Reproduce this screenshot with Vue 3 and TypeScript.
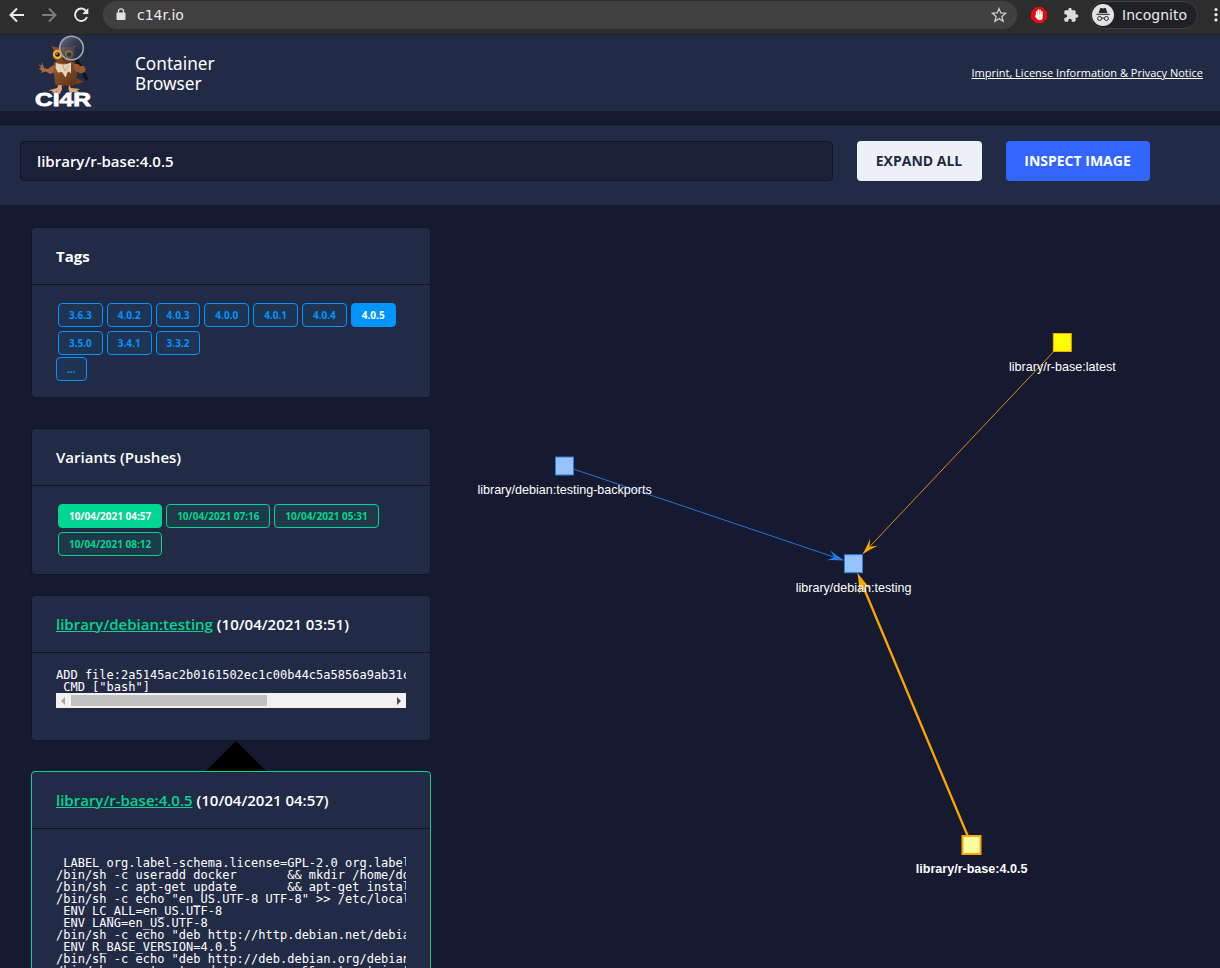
<script setup lang="ts">
interface Chip {
  label: string
  active?: boolean
}

interface GraphNode {
  label: string
  x: number
  y: number
  half: number
  kind: 'image' | 'latest' | 'selected'
}

interface Edge {
  x1: number
  y1: number
  x2: number
  y2: number
  lineX: number
  lineY: number
  angle: number
  size: number
  kind: 'blue' | 'orange' | 'strong'
}

const tags: Chip[] = [
  { label: '3.6.3' },
  { label: '4.0.2' },
  { label: '4.0.3' },
  { label: '4.0.0' },
  { label: '4.0.1' },
  { label: '4.0.4' },
  { label: '4.0.5', active: true },
  { label: '3.5.0' },
  { label: '3.4.1' },
  { label: '3.3.2' },
]

const variants: Chip[] = [
  { label: '10/04/2021 04:57', active: true },
  { label: '10/04/2021 07:16' },
  { label: '10/04/2021 05:31' },
  { label: '10/04/2021 08:12' },
]

const debianLayers = [
  'ADD file:2a5145ac2b0161502ec1c00b44c5a5856a9ab31c',
  ' CMD ["bash"]',
].join('\n')

const rBaseLayers = [
  '',
  ' LABEL org.label-schema.license=GPL-2.0 org.label-schema.vcs-url',
  '/bin/sh -c useradd docker       && mkdir /home/docker',
  '/bin/sh -c apt-get update       && apt-get install -y',
  '/bin/sh -c echo "en_US.UTF-8 UTF-8" >> /etc/locale.gen',
  ' ENV LC_ALL=en_US.UTF-8',
  ' ENV LANG=en_US.UTF-8',
  '/bin/sh -c echo "deb http://http.debian.net/debian sid main"',
  ' ENV R_BASE_VERSION=4.0.5',
  '/bin/sh -c echo "deb http://deb.debian.org/debian"',
  '/bin/sh -c apt-get update         && apt-get install',
].join('\n')

const nodes: GraphNode[] = [
  { label: 'library/debian:testing-backports', x: 564.5, y: 466, half: 9, kind: 'image' },
  { label: 'library/debian:testing', x: 853.5, y: 563.7, half: 9, kind: 'image' },
  { label: 'library/r-base:latest', x: 1062.3, y: 342.5, half: 9, kind: 'latest' },
  { label: 'library/r-base:4.0.5', x: 971.5, y: 845, half: 9, kind: 'selected' },
]

function edge(from: GraphNode, tipX: number, tipY: number, size: number, kind: Edge['kind']): Edge {
  const angle = Math.atan2(tipY - from.y, tipX - from.x)
  return {
    x1: from.x,
    y1: from.y,
    x2: tipX,
    y2: tipY,
    lineX: tipX - Math.cos(angle) * size * 0.5,
    lineY: tipY - Math.sin(angle) * size * 0.5,
    angle: (angle * 180) / Math.PI,
    size,
    kind,
  }
}

function arrowHead(s: number): string {
  const barb = s * 0.31
  return `M0 0Q${-s * 0.6} ${s * 0.14} ${-s} ${barb}L${-s * 0.62} 0L${-s} ${-barb}Q${-s * 0.6} ${-s * 0.14} 0 0Z`
}

const edges: Edge[] = [
  edge(nodes[0], 844.5, 560.6, 17, 'blue'),
  edge(nodes[2], 862.3, 554.5, 17, 'orange'),
  edge(nodes[3], 857.3, 572.5, 21, 'strong'),
]
</script>

<template>
  <div class="window">
    <div class="chrome">
      <svg class="nav" width="94" height="30" viewBox="0 0 94 30" fill="none">
        <path d="M24 15H11M17 8.5 10.5 15 17 21.5" stroke="#e8eaed" stroke-width="2" />
        <path d="M42 15H55M49 8.500 55.500 15 49 21.500" stroke="#7c7d80" stroke-width="2" />
        <path d="M86.300 11.200A6.200 6.200 0 1 0 87 17" stroke="#e8eaed" stroke-width="2" />
        <path d="M88.300 8V14H82.300Z" fill="#e8eaed" />
      </svg>
      <div class="omnibox">
        <svg width="10" height="13" viewBox="0 0 10 13">
          <rect x="0.500" y="4.500" width="9" height="7.500" rx="1" fill="#e0e0e0" />
          <path d="M2.500 5V3.300a2.500 2.500 0 0 1 5 0V5" fill="none" stroke="#e0e0e0" stroke-width="1.300" />
        </svg>
        <span class="address">c14r.io</span>
        <svg class="star" width="16" height="16" viewBox="0 0 16 16">
          <path d="M8 1.500 9.800 6 14.700 6.300 10.900 9.500 12.100 14.200 8 11.600 3.900 14.200 5.100 9.500 1.300 6.300 6.200 6Z" fill="none" stroke="#c9cbce" stroke-width="1.300" />
        </svg>
      </div>
      <svg class="blocker" width="16" height="16" viewBox="0 0 16 16">
        <path d="M4.700 0h6.600L16 4.700v6.600L11.300 16H4.700L0 11.300V4.700Z" fill="#e8090b" />
        <path d="M5.600 8.500V4.700M7.300 7.500V3M9.100 7.500V3.300M10.900 8.500V4.700" stroke="#fff" stroke-width="1.500" stroke-linecap="round" />
        <path d="M4.800 7.500h6.900v2.200q0 3.500-3 3.500-2.200 0-3.100-1.800L3.700 8.700q.6-.8 1.400.2Z" fill="#fff" />
      </svg>
      <svg class="puzzle" width="16" height="16" viewBox="0 0 24 24">
        <path d="M20.500 11H19V7a2 2 0 0 0-2-2h-4V3.500a2.500 2.500 0 0 0-5 0V5H4a2 2 0 0 0-2 2v3.800h1.500a2.700 2.700 0 0 1 0 5.400H2V20a2 2 0 0 0 2 2h3.800v-1.500a2.700 2.700 0 0 1 5.400 0V22H17a2 2 0 0 0 2-2v-4h1.500a2.500 2.500 0 0 0 0-5Z" fill="#dadce0" />
      </svg>
      <div class="incognito">
        <svg width="22" height="22" viewBox="0 0 22 22">
          <circle cx="11" cy="11" r="11" fill="#e2e2e2" />
          <path d="M6.700 9 8 4.600q.3-.8 1.200-.5l1.800.4 1.800-.4q.9-.3 1.200.5L15.300 9Z" fill="#252629" />
          <path d="M4.500 10.300H17.500" stroke="#252629" stroke-width="1.100" />
          <g fill="none" stroke="#252629" stroke-width="1">
            <circle cx="7.600" cy="14.500" r="2" />
            <circle cx="14.400" cy="14.500" r="2" />
            <path d="M9.600 14.300q1.400-.8 2.800 0" />
          </g>
        </svg>
        <span>Incognito</span>
      </div>
      <svg class="kebab" width="6" height="16" viewBox="0 0 6 16" fill="#e8eaed">
        <circle cx="3" cy="2.500" r="1.600" />
        <circle cx="3" cy="7.700" r="1.600" />
        <circle cx="3" cy="12.900" r="1.600" />
      </svg>
    </div>

    <header class="header">
      <svg class="logo" width="62" height="76" viewBox="0 0 62 76">
        <defs>
          <linearGradient id="lens" x1="0" y1="0" x2="1" y2="1">
            <stop offset="0" stop-color="#a59fa0" stop-opacity="0.700" />
            <stop offset="0.500" stop-color="#3b4763" stop-opacity="0.500" />
            <stop offset="1" stop-color="#0d1830" stop-opacity="0.950" />
          </linearGradient>
          <linearGradient id="feather" x1="0" y1="0" x2="1" y2="1">
            <stop offset="0" stop-color="#9a5d30" />
            <stop offset="1" stop-color="#5c3113" />
          </linearGradient>
        </defs>
        <path d="M42 43 49.500 46.500 44 49 38 49Z" fill="#73401c" />
        <path d="M22 29Q17 31 14 34L10 33 8 27 7.500 31 4.500 29 7 33 4.500 33 8 36 6.500 38 12 36.500 16 39Q21 38 23 34Z" fill="#a5683f" />
        <path d="M20.500 27Q18.500 34 20.500 42L21 49Q26 53 31 50 37 53 42 49L42.500 42Q44 34 40 27Z" fill="url(#feather)" />
        <path d="M17 10.500Q20 13 25 12.500L36 12 43 10 40 14 42 22Q38 29 31 28 23 29 19.500 23 18 18 20 15Z" fill="url(#feather)" />
        <path d="M22 28Q30 31 37 27.500L37 38 34 36.500 31.500 42.500 28 37 24 37.500 21.500 33Z" fill="#e6d4ba" />
        <path d="M28.500 30 31 36 34.500 30" fill="none" stroke="#b49a7b" stroke-width="0.800" />
        <path d="M24.500 50 23 53 14 55.500 18.500 56 18 58 23 56.500 26 59 28 54 27.500 50ZM35 50 37 53 46 54 43 55.500 46 58 39 57 36 59 34.500 54Z" fill="#dba677" />
        <circle cx="23.500" cy="19.500" r="4.700" fill="#f3b320" />
        <circle cx="23.500" cy="19.500" r="2.200" fill="#17120f" />
        <circle cx="23" cy="19" r="0.800" fill="#fff" />
        <circle cx="35" cy="19.500" r="4.500" fill="#c29b27" />
        <circle cx="35" cy="19.500" r="2.300" fill="#242423" />
        <path d="M27.500 20 29.500 26 32 21Z" fill="#3f3026" />
        <path d="M42.500 24.500 52.500 43.500" stroke="#12141a" stroke-width="3.600" stroke-linecap="round" />
        <path d="M40 29 44 29 46 31 50 31 51.500 34 51 37 47.500 38.500 43 37 40 34Z" fill="#96582e" />
        <circle cx="37.500" cy="13" r="11.800" fill="url(#lens)" stroke="#a4a5b0" stroke-width="1.600" />
        <text x="1" y="71" class="wordmark" textLength="56" lengthAdjust="spacingAndGlyphs">CI4R</text>
      </svg>
      <div class="brand">
        <div>Container</div>
        <div>Browser</div>
      </div>
      <a class="imprint">Imprint, License Information &amp; Privacy Notice</a>
    </header>

    <section class="toolbar">
      <div class="search">library/r-base:4.0.5</div>
      <button class="btn light">EXPAND ALL</button>
      <button class="btn primary">INSPECT IMAGE</button>
    </section>

    <main class="content">
      <aside class="side">
        <section class="card tags">
          <h2>Tags</h2>
          <div class="body">
            <div class="chips">
              <span v-for="t in tags" :key="t.label" class="chip info" :class="{ active: t.active }">{{ t.label }}</span>
            </div>
            <span class="chip info more">...</span>
          </div>
        </section>

        <section class="card variants">
          <h2>Variants (Pushes)</h2>
          <div class="body">
            <div class="chips">
              <span v-for="v in variants" :key="v.label" class="chip success" :class="{ active: v.active }">{{ v.label }}</span>
            </div>
          </div>
        </section>

        <section class="card">
          <h2><a>library/debian:testing</a> (10/04/2021 03:51)</h2>
          <div class="body layers">
            <pre>{{ debianLayers }}</pre>
            <div class="scrollbar">
              <i class="arrow left"></i>
              <i class="thumb"></i>
              <i class="arrow right"></i>
            </div>
          </div>
        </section>

        <div class="pointer"></div>

        <section class="card current">
          <h2><a>library/r-base:4.0.5</a> (10/04/2021 04:57)</h2>
          <div class="body">
            <pre>{{ rBaseLayers }}</pre>
          </div>
        </section>
      </aside>

      <svg class="graph" width="789" height="762" viewBox="431 206 789 762">
        <g v-for="(e, i) in edges" :key="i" class="edge" :class="e.kind">
          <line :x1="e.x1" :y1="e.y1" :x2="e.lineX" :y2="e.lineY" />
          <path :d="arrowHead(e.size)" :transform="`translate(${e.x2} ${e.y2}) rotate(${e.angle})`" />
        </g>
        <g v-for="n in nodes" :key="n.label" class="node" :class="n.kind">
          <rect :x="n.x - n.half" :y="n.y - n.half" :width="n.half * 2" :height="n.half * 2" />
          <text :x="n.x + 0.1" :y="n.y + 28">{{ n.label }}</text>
        </g>
      </svg>
    </main>
  </div>
</template>

<style>
body {
  margin: 0;
  overflow: hidden;
  background: #151a30;
}
</style>

<style scoped>
.window {
  width: 1220px;
  height: 968px;
  overflow: hidden;
  background: #151a30;
  color: #fff;
  font-family: 'Open Sans', 'Noto Sans', sans-serif;
  display: flex;
  flex-direction: column;
}
.window * {
  box-sizing: border-box;
}
.chrome {
  flex: none;
  height: 35px;
  padding-bottom: 4px;
  background: #2d2d2d;
  border-bottom: 1px solid #202124;
  display: flex;
  align-items: center;
  font: 14px 'DejaVu Sans', sans-serif;
  color: #e8eaed;
}
.nav {
  margin-right: 9px;
}
.omnibox {
  width: 914px;
  height: 28px;
  margin-top: -1px;
  padding: 0 10px 0 13px;
  border-radius: 14px;
  background: #404040;
  display: flex;
  align-items: center;
}
.address {
  margin-left: 11px;
}
.star {
  margin-left: auto;
}
.blocker {
  margin-left: 14px;
}
.puzzle {
  margin-left: 16px;
}
.incognito {
  width: 108px;
  height: 28px;
  margin: -1px 0 0 11px;
  padding-left: 1px;
  border: 1px solid #404144;
  border-radius: 14px;
  background: #202124;
  display: flex;
  align-items: center;
  gap: 8px;
}
.incognito svg {
  flex: none;
}
.kebab {
  flex: none;
  margin-left: 15px;
}
.header {
  flex: none;
  height: 76px;
  padding: 0 17px 0 34px;
  background: #222b45;
  display: flex;
  align-items: center;
}
.wordmark {
  font: bold 18px 'Liberation Sans', sans-serif;
  fill: #fff;
  stroke: #fff;
  stroke-width: 0.8px;
}
.brand {
  margin: 2px 0 0 39px;
  font-family: 'Noto Sans', sans-serif;
  font-size: 17.2px;
  line-height: 20px;
}
.imprint {
  margin-left: auto;
  font-size: 11px;
  line-height: 16px;
  text-decoration: underline;
}
.toolbar {
  flex: none;
  height: 82px;
  margin-top: 13px;
  padding: 16px 20px 0;
  background: #222b45;
  border-top: 1px solid #101426;
  border-bottom: 1px solid #101426;
  display: flex;
  align-items: flex-start;
  gap: 24px;
}
.search {
  width: 813px;
  height: 40px;
  padding: 0 16px;
  border: 1px solid #101426;
  border-radius: 4px;
  background: #1a2038;
  font-size: 15px;
  font-weight: 600;
  line-height: 39px;
}
.btn {
  height: 40px;
  padding: 0 1px 0 0;
  border: 0;
  border-radius: 4px;
  font: 700 14px/40px 'Open Sans', sans-serif;
}
.light {
  width: 125px;
  background: #edf1f7;
  color: #222b45;
}
.primary {
  width: 144px;
  background: #3366ff;
  color: #fff;
}
.content {
  flex: 1;
  min-height: 0;
  display: flex;
}
.side {
  width: 431px;
  padding: 21px 0 0 31px;
  display: flex;
  flex-direction: column;
}
.card {
  flex: none;
  width: 400px;
  border: 1px solid #101426;
  border-radius: 4px;
  background: #222b45;
}
.card h2 {
  margin: 0;
  padding: 16px 24px;
  border-bottom: 1px solid #101426;
  font-size: 15px;
  font-weight: 600;
  line-height: 24px;
}
.card h2 a {
  color: #00d68f;
  text-decoration: underline;
}
.tags {
  margin-bottom: 30px;
}
.tags h2 {
  font-weight: 700;
}
.variants {
  margin-bottom: 20px;
}
.current {
  border-color: #00d68f;
}
.body {
  padding: 16px 24px;
}
.chips {
  display: flex;
  flex-wrap: wrap;
}
.chip {
  height: 24px;
  margin: 2px;
  padding: 0 9.98px;
  border: 1px solid;
  border-radius: 4px;
  font-size: 10px;
  font-weight: 700;
  line-height: 22px;
}
.info {
  border-color: #0095ff;
  color: #0095ff;
  background: rgba(0, 149, 255, 0.08);
}
.success {
  border-color: #00d68f;
  color: #00d68f;
  background: rgba(0, 214, 143, 0.08);
}
.info.active {
  background: #0095ff;
  color: #fff;
}
.success.active {
  background: #00d68f;
  color: #fff;
}
.success {
  padding: 0 9.95px;
}
.more {
  display: block;
  width: 31px;
  margin: 0;
}
pre {
  margin: 0;
  overflow: hidden;
  font: 12px/12px 'DejaVu Sans Mono', monospace;
}
.layers {
  padding-bottom: 32px;
}
.scrollbar {
  height: 15px;
  background: #f1f1f1;
  display: flex;
  align-items: center;
}
.thumb {
  width: 196px;
  height: 11px;
  background: #c1c1c1;
}
.arrow {
  border: solid transparent;
  border-width: 4px 0;
}
.arrow.left {
  margin: 0 6px 0 5px;
  border-right: 4px solid #a3a3a3;
}
.arrow.right {
  margin-left: auto;
  margin-right: 5px;
  border-left: 4px solid #505050;
}
.pointer {
  flex: none;
  width: 60px;
  height: 30px;
  margin-left: 175px;
  background: #000;
  clip-path: polygon(50% 0, 100% 100%, 0 100%);
}
.graph {
  flex: none;
}
.edge line {
  stroke-width: 1;
}
.blue line {
  stroke: #2b7ce9;
  stroke-opacity: 0.9;
}
.blue path {
  fill: #2b7ce9;
}
.orange line,
.strong line {
  stroke: #ffa500;
}
.orange line {
  stroke-opacity: 0.85;
}
.orange path,
.strong path {
  fill: #ffa500;
}
.edge.strong line {
  stroke-width: 2.3;
}
.node rect {
  fill: #97c2fc;
  stroke: #2b7ce9;
  stroke-width: 1;
}
.node text {
  fill: #fff;
  font: 12.55px 'Liberation Sans', sans-serif;
  text-anchor: middle;
}
.node.latest rect {
  fill: #ff0;
  stroke: #ffa500;
}
.node.selected rect {
  fill: #ffffa3;
  stroke: #ffa500;
  stroke-width: 2;
}
.node.selected text {
  font-weight: bold;
}
</style>
